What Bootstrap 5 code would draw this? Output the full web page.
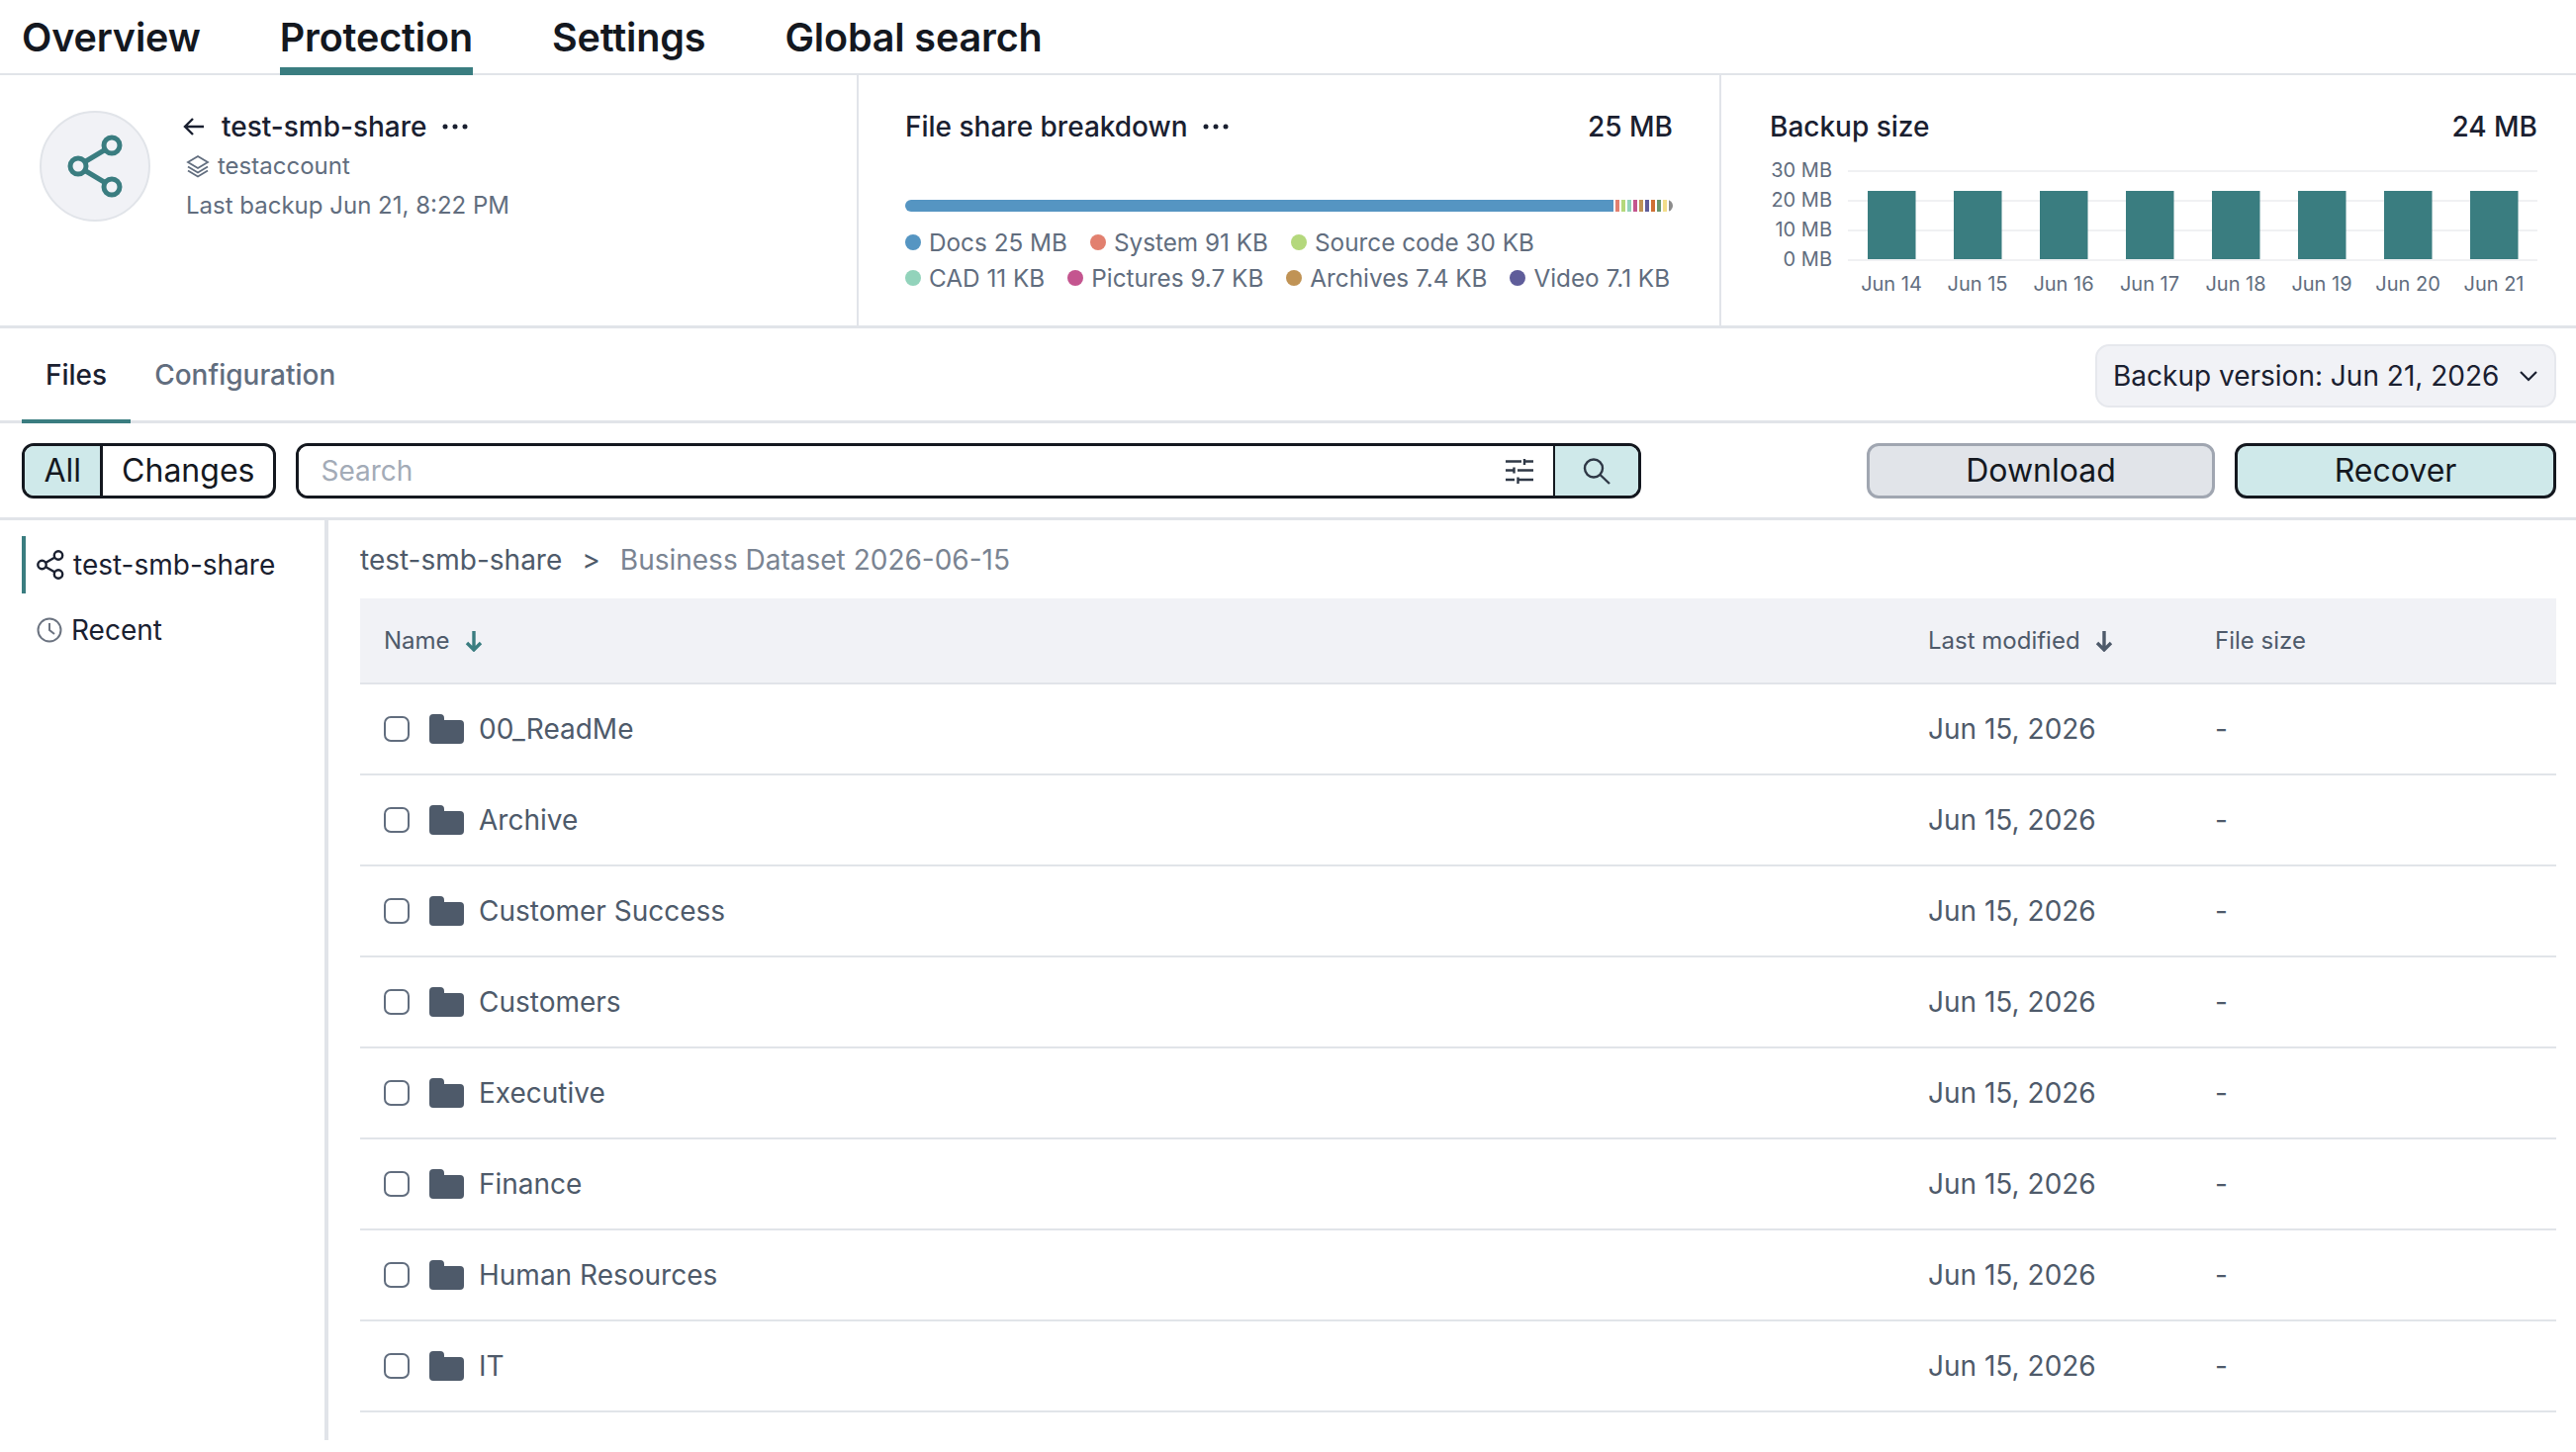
<!DOCTYPE html>
<html lang="en">
<head>
  <meta charset="UTF-8">
  <title>test-smb-share</title>
  <link href="https://cdn.jsdelivr.net/npm/bootstrap@5.3.3/dist/css/bootstrap.min.css" rel="stylesheet">
  <style>
    body { font-family: Inter, "Liberation Sans", sans-serif; color: #1a2030; background: #fff; overflow: hidden; }
    svg { display: block; flex: none; }
    .top-tabs { height: 76px; padding-left: 22px; gap: 80px; border-bottom: 2px solid #e1e4e9; }
    .top-tab { height: 76px; line-height: 76px; font-size: 39.500px; font-weight: 600; color: #14181f; text-decoration: none; letter-spacing: -0.15px; }
    .top-tab.is-on { box-shadow: inset 0 -8px 0 #3a7d80; }
    .sum-row { height: 256px; border-bottom: 3px solid #e1e4e9; }
    .sum-a { width: 868px; padding: 36px 0 0 40px; border-right: 2px solid #e1e4e9; gap: 36px; }
    .sum-b { width: 872px; padding: 34px 47px 0 47px; border-right: 2px solid #e1e4e9; }
    .sum-c { width: 864px; padding: 34px 39px 0 49px; }
    .avatar { width: 112px; height: 112px; border-radius: 50%; background: #f1f2f6; border: 2px solid #e1e4e9; }
    .avatar svg { margin-left: 2px; }
    .res-text { margin-top: -4px; }
    .res-name { font-size: 28px; font-weight: 500; line-height: 40px; }
    .res-back { margin-left: -3px; margin-right: 17px; }
    .more-dots { margin-left: 15px; }
    .res-sub { font-size: 24px; color: #616d7e; line-height: 40px; }
    .sum-title { font-size: 28px; font-weight: 500; line-height: 36px; }
    .share-bar { height: 12px; margin-top: 56px; gap: 2px; border-radius: 6px; overflow: hidden; }
    .share-bar span { width: 4px; flex: none; }
    .share-bar .seg-main { flex: 1; }
    .legend-list { column-gap: 23px; row-gap: 6px; margin-top: 16px; font-size: 24.300px; line-height: 30px; color: #616d7e; }
    .dot-mark { width: 16px; height: 16px; border-radius: 50%; margin-right: 8px; }
    .size-chart { margin-top: 8px; }
    .sub-tabs { height: 96px; padding: 0 20px 0 22px; border-bottom: 3px solid #e1e4e9; }
    .sub-tab { display: block; height: 96px; line-height: 94px; font-size: 28px; font-weight: 500; text-decoration: none; color: #616d7e; padding: 0 24px; }
    .sub-tab.is-on { color: #1a2030; box-shadow: inset 0 -4px 0 #3a7d80; }
    .version-btn { height: 64px; width: 466px; background: #f1f2f6; border: 2px solid #e6e8ed; border-radius: 14px; font-size: 28px; color: #1a2030; padding: 0 16px; }
    .tool-row { height: 98px; padding: 20px 20px 0 22px; border-bottom: 3px solid #e1e4e9; }
    .seg-group { height: 56px; border: 3px solid #14181f; border-radius: 12px; overflow: hidden; font-size: 32px; }
    .seg-item { padding: 0 19px; line-height: 50px; color: #14181f; }
    .seg-item.is-on { background: #cfe9ea; border-right: 3px solid #14181f; padding: 0 19px 0 19.500px; }
    .find-box { width: 1360px; height: 56px; margin-left: 20px; border: 3px solid #14181f; border-radius: 12px; overflow: hidden; }
    .find-box .form-control { border: 0; border-radius: 0; height: 50px; font-size: 28px; padding: 0 0 0 22px; box-shadow: none; min-width: 0; width: auto; flex: 1 1 0; }
    .find-box .form-control::placeholder { color: #a3abb7; }
    .find-tune { width: 68px; flex: none; }
    .find-go { width: 86px; flex: none; background: #cfe9ea; border-left: 2px solid #14181f; }
    .act-btn { height: 56px; font-size: 32px; line-height: 1; border-radius: 12px; color: #14181f; border-width: 3px; padding: 0; }
    .act-btn.is-grey { width: 352px; margin-left: auto; background: #e1e4e9; border-color: #a0a6b1; }
    .act-btn.is-teal { width: 325px; margin-left: 20px; background: #cfe9ea; border-color: #14181f; }
    .page-body { height: 930px; }
    .side-col { width: 332px; border-right: 4px solid #e1e4e9; padding: 16px 0 0 22px; flex: none; }
    .side-item { height: 58px; padding-left: 11px; gap: 9px; font-size: 28px; color: #1a2030; border-left: 4px solid transparent; }
    .side-item.is-on { border-left-color: #3a7d80; }
    .side-item + .side-item { margin-top: 8px; }
    .main-col { padding: 0 20px 0 32px; }
    .crumbs { height: 79px; padding-top: 20px; font-size: 28px; line-height: 40px; color: #4e5a6a; gap: 20px; }
    .crumbs .crumb-end { color: #7a8492; }
    .file-table { table-layout: fixed; margin: 0; }
    .file-table th { height: 86px; background: #f1f2f6; font-size: 24px; font-weight: 400; color: #4e5a6a; border-bottom: 2px solid #e1e4e9; padding: 0 0 0 24px; vertical-align: middle; }
    .file-table th + th { padding-left: 25px; }
    .file-table td { height: 92px; font-size: 28px; color: #4e5a6a; border-bottom: 2px solid #e1e4e9; padding: 0 0 0 24px; vertical-align: middle; }
    .file-table td + td { padding-left: 25px; }
    .file-table .form-check-input { width: 26px; height: 26px; margin: 0; border: 2px solid #616d7e; border-radius: 7px; }
    .sort-head { gap: 15px; }
    .name-wrap { gap: 20px; }
    .name-wrap svg { margin-right: -5px; }
  </style>
</head>
<body>

<div class="top-tabs d-flex">
  <a class="top-tab" href="#">Overview</a>
  <a class="top-tab is-on" href="#">Protection</a>
  <a class="top-tab" href="#">Settings</a>
  <a class="top-tab" href="#">Global search</a>
</div>

<div class="sum-row d-flex">
  <div class="sum-a d-flex">
    <div class="avatar d-flex align-items-center justify-content-center">
      <svg width="60" height="64" viewBox="0 0 60 64" fill="none" stroke="#3a7d80" stroke-width="5">
        <circle cx="46" cy="11" r="8"/><circle cx="12" cy="32" r="8"/><circle cx="46" cy="53" r="8"/>
        <path d="M19 27.500 39 15.500M19 36.500 39 48.500"/>
      </svg>
    </div>
    <div class="res-text">
      <div class="res-name d-flex align-items-center">
        <svg class="res-back" width="22" height="22" viewBox="0 0 22 22" fill="none" stroke="#1a2030" stroke-width="2.400"><path d="M21 11H2M10 3 2 11l8 8"/></svg>
        <span>test-smb-share</span>
        <svg class="more-dots" width="26" height="6" viewBox="0 0 26 6" fill="#1a2030"><circle cx="3" cy="3" r="2.500"/><circle cx="13" cy="3" r="2.500"/><circle cx="23" cy="3" r="2.500"/></svg>
      </div>
      <div class="res-sub d-flex align-items-center">
        <svg class="me-2" width="24" height="24" viewBox="0 0 24 24" fill="none" stroke="#616d7e" stroke-width="1.800"><path d="M12 2 22 8 12 14 2 8zM2 12.500l10 6 10-6M2 16.500l10 6 10-6"/></svg>
        <span>testaccount</span>
      </div>
      <div class="res-sub">Last backup Jun 21, 8:22 PM</div>
    </div>
  </div>

  <div class="sum-b">
    <div class="d-flex align-items-center justify-content-between">
      <div class="sum-title d-flex align-items-center">
        <span>File share breakdown</span>
        <svg class="more-dots" width="26" height="6" viewBox="0 0 26 6" fill="#1a2030"><circle cx="3" cy="3" r="2.500"/><circle cx="13" cy="3" r="2.500"/><circle cx="23" cy="3" r="2.500"/></svg>
      </div>
      <div class="sum-title">25 MB</div>
    </div>
    <div class="share-bar d-flex" id="shareBar"></div>
    <div class="legend-list d-flex flex-wrap" id="legendList"></div>
  </div>

  <div class="sum-c">
    <div class="d-flex align-items-center justify-content-between">
      <div class="sum-title">Backup size</div>
      <div class="sum-title">24 MB</div>
    </div>
    <svg class="size-chart" width="776" height="150" viewBox="1789 154 776 150" id="sizeChart"></svg>
  </div>
</div>

<div class="sub-tabs d-flex align-items-start justify-content-between">
  <div class="d-flex">
    <a class="sub-tab is-on" href="#">Files</a>
    <a class="sub-tab" href="#">Configuration</a>
  </div>
  <button class="version-btn btn d-flex align-items-center justify-content-between mt-3" type="button">
    <span>Backup version: Jun 21, 2026</span>
    <svg width="20" height="12" viewBox="0 0 20 12" fill="none" stroke="#1a2030" stroke-width="2.200"><path d="M2 2l8 8 8-8"/></svg>
  </button>
</div>

<div class="tool-row d-flex align-items-start">
  <div class="seg-group d-flex">
    <div class="seg-item is-on">All</div>
    <div class="seg-item">Changes</div>
  </div>
  <div class="find-box d-flex">
    <input class="form-control" type="text" placeholder="Search">
    <div class="find-tune d-flex align-items-center justify-content-center">
      <svg width="28" height="25" viewBox="0 0 28 25" fill="none" stroke="#2f3846" stroke-width="2.400"><path d="M0 2.500h16M19 2.500h9M19 0v6M0 11.500h8.500M8.500 8.500v6M12 11.500h16M0 21h9M12.500 21H28M12.500 18.500V25"/></svg>
    </div>
    <div class="find-go d-flex align-items-center justify-content-center">
      <svg width="28" height="27" viewBox="0 0 28 27" fill="none" stroke="#2f3846" stroke-width="2.400"><circle cx="11" cy="10.500" r="9"/><path d="M17.500 17 27 26"/></svg>
    </div>
  </div>
  <button class="act-btn is-grey btn" type="button">Download</button>
  <button class="act-btn is-teal btn" type="button">Recover</button>
</div>

<div class="page-body d-flex">
  <div class="side-col">
    <div class="side-item is-on d-flex align-items-center">
      <svg width="28" height="30" viewBox="0 0 28 30" fill="none" stroke="#1a2030" stroke-width="2.400"><circle cx="22" cy="5.500" r="4.200"/><circle cx="5.500" cy="15" r="4.200"/><circle cx="22" cy="24.500" r="4.200"/><path d="M9 13 18.500 7.500M9 17l9.500 5.500"/></svg>
      <span>test-smb-share</span>
    </div>
    <div class="side-item d-flex align-items-center">
      <svg width="26" height="26" viewBox="0 0 26 26" fill="none" stroke="#6b7380" stroke-width="2"><circle cx="13" cy="13" r="11.500"/><path d="M13 6v7l5 4"/></svg>
      <span>Recent</span>
    </div>
  </div>

  <div class="main-col flex-grow-1">
    <div class="crumbs d-flex">
      <span>test-smb-share</span>
      <span>&gt;</span>
      <span class="crumb-end">Business Dataset 2026-06-15</span>
    </div>
    <table class="file-table table">
      <colgroup><col style="width:1560px"><col style="width:290px"><col></colgroup>
      <thead>
        <tr>
          <th><div class="sort-head d-flex align-items-center">Name
            <svg width="18" height="22" viewBox="0 0 18 22" fill="none" stroke="#3a7d80" stroke-width="3.400"><path d="M9 1v19M2 13l7 7 7-7"/></svg></div></th>
          <th><div class="sort-head d-flex align-items-center">Last modified
            <svg width="18" height="22" viewBox="0 0 18 22" fill="none" stroke="#4e5a6a" stroke-width="3.400"><path d="M9 1v19M2 13l7 7 7-7"/></svg></div></th>
          <th>File size</th>
        </tr>
      </thead>
      <tbody id="fileRows"></tbody>
    </table>
  </div>
</div>

<script>
  // bar and legend
  var segs = ['#e2806f', '#b4d87c', '#92d3bb', '#c4558f', '#c09355', '#5f5d9a', '#cf6f34', '#68966c', '#f3dd8a', '#8c8c8c'];
  var bar = '<span class="seg-main" style="background:#5595c2"></span>';
  segs.forEach(function (c) { bar += '<span style="background:' + c + '"></span>'; });
  document.getElementById('shareBar').innerHTML = bar;

  var legend = [
    ['#5595c2', 'Docs 25 MB'], ['#e2806f', 'System 91 KB'], ['#b4d87c', 'Source code 30 KB'],
    ['#92d3bb', 'CAD 11 KB'], ['#c4558f', 'Pictures 9.7 KB'], ['#c09355', 'Archives 7.4 KB'], ['#5f5d9a', 'Video 7.1 KB']
  ];
  document.getElementById('legendList').innerHTML = legend.map(function (l) {
    return '<div class="d-flex align-items-center"><span class="dot-mark" style="background:' + l[0] + '"></span>' + l[1] + '</div>';
  }).join('');

  // backup size chart
  var chart = '';
  [[173, '30 MB'], [203, '20 MB'], [233, '10 MB'], [263, '0 MB']].forEach(function (g) {
    chart += '<rect x="1868" y="' + (g[0] - 1) + '" width="697" height="2" fill="#f0f1f3"/>';
    chart += '<text x="1852" y="' + (g[0] + 6) + '" text-anchor="end" font-size="20" fill="#616d7e">' + g[1] + '</text>';
  });
  ['Jun 14', 'Jun 15', 'Jun 16', 'Jun 17', 'Jun 18', 'Jun 19', 'Jun 20', 'Jun 21'].forEach(function (d, i) {
    var x = 1888 + i * 87;
    chart += '<rect x="' + x + '" y="193" width="48.500" height="69" fill="#3a7d80"/>';
    chart += '<text x="' + (x + 24) + '" y="294" text-anchor="middle" font-size="20" fill="#616d7e">' + d + '</text>';
  });
  document.getElementById('sizeChart').innerHTML = chart;

  // file rows
  var folder = '<svg width="35" height="30" viewBox="0 0 35 30" fill="#4e5a6a"><path d="M4 0h7a4 4 0 0 1 4 4v2h16a4 4 0 0 1 4 4v16a4 4 0 0 1-4 4H4a4 4 0 0 1-4-4V4a4 4 0 0 1 4-4z"/></svg>';
  var names = ['00_ReadMe', 'Archive', 'Customer Success', 'Customers', 'Executive', 'Finance', 'Human Resources', 'IT'];
  document.getElementById('fileRows').innerHTML = names.map(function (n) {
    return '<tr><td><div class="name-wrap d-flex align-items-center"><input class="form-check-input" type="checkbox">' + folder + '<span>' + n + '</span></div></td>' +
      '<td>Jun 15, 2026</td><td>-</td></tr>';
  }).join('');
</script>
<script src="https://cdn.jsdelivr.net/npm/bootstrap@5.3.3/dist/js/bootstrap.bundle.min.js"></script>
</body>
</html>
